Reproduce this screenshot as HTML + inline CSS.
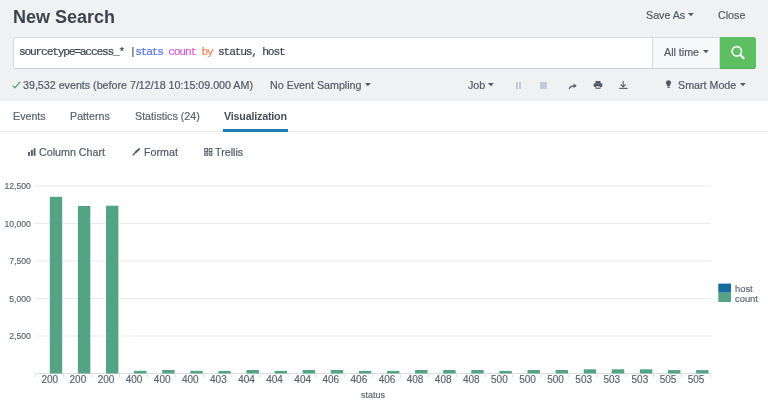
<!DOCTYPE html>
<html><head><meta charset="utf-8">
<style>
*{margin:0;padding:0;box-sizing:border-box}
html,body{width:768px;height:408px;overflow:hidden;background:#fff}
body{position:relative;font-family:"Liberation Sans",sans-serif;color:#515a65}
.a{position:absolute;white-space:pre;line-height:1;will-change:transform}
#hdr{position:absolute;left:0;top:0;width:768px;height:101px;background:#eff1f3}
.t{font-size:10.7px;-webkit-text-stroke:0.2px}
.cr{position:absolute}
.caret{position:absolute;width:0;height:0;border-left:2.9px solid transparent;border-right:2.9px solid transparent;border-top:3.4px solid #515a65}
</style></head><body>
<div id="hdr"></div>
<div class="a" style="left:13px;top:8px;font-size:18px;font-weight:bold;color:#3c444d">New Search</div>
<div class="a t" style="left:646px;top:10px">Save As</div>
<svg class="cr" style="left:688.1px;top:13.3px" width="6" height="4" viewBox="0 0 6 4"><path d="M0 0H5.8L2.9 3.3Z" fill="#515a65"/></svg>
<div class="a t" style="left:717.5px;top:10px">Close</div>

<!-- search bar -->
<div style="position:absolute;left:13px;top:37px;width:743px;height:31.5px;border:1px solid #d5dae0;border-bottom-color:#c9d0d7;border-radius:3px;background:#fff"></div>
<div style="position:absolute;left:652px;top:37px;width:68px;height:31.5px;border:1px solid #d5dae0;border-bottom-color:#c9d0d7;background:#f7f8f9"></div>
<div style="position:absolute;left:720px;top:37px;width:36px;height:31.5px;background:#5dbe62;border-bottom:1px solid #50ad56;border-radius:0 3px 3px 0"></div>
<div class="a" style="left:19.4px;top:46.5px;font-family:'Liberation Mono',monospace;font-size:11.3px;letter-spacing:-1.25px;-webkit-text-stroke:0.2px;color:#3c444d">sourcetype=access_* <span style="color:#515a65">|</span><span style="color:#5877e0">stats</span> <span style="color:#d060d6">count</span> <span style="color:#e5865a">by</span> status, host</div>
<div class="a t" style="left:664px;top:47px">All time</div>
<svg class="cr" style="left:702.9px;top:50.4px" width="6" height="4" viewBox="0 0 6 4"><path d="M0 0H5.8L2.9 3.3Z" fill="#515a65"/></svg>
<svg style="position:absolute;left:725px;top:40px" width="25" height="25" viewBox="0 0 25 25"><circle cx="11.8" cy="11.3" r="4.7" fill="none" stroke="#fff" stroke-width="1.65"/><line x1="15.2" y1="14.8" x2="18.7" y2="18.3" stroke="#fff" stroke-width="2" stroke-linecap="round"/></svg>

<!-- status row -->
<svg style="position:absolute;left:12px;top:81px" width="9" height="8" viewBox="0 0 9 8"><path d="M0.6 4.6 L2.9 6.8 L8.2 0.8" fill="none" stroke="#4ea462" stroke-width="1.25"/></svg>
<div class="a t" style="left:23px;top:80px">39,532 events (before 7/12/18 10:15:09.000 AM)</div>
<div class="a t" style="left:270px;top:80px">No Event Sampling</div>
<svg class="cr" style="left:364.6px;top:82.9px" width="6" height="4" viewBox="0 0 6 4"><path d="M0 0H5.8L2.9 3.3Z" fill="#515a65"/></svg>
<div class="a t" style="left:467.5px;top:80px">Job</div>
<svg class="cr" style="left:488.4px;top:83px" width="6" height="4" viewBox="0 0 6 4"><path d="M0 0H5.8L2.9 3.3Z" fill="#515a65"/></svg>
<div style="position:absolute;left:515.5px;top:81.7px;width:2.3px;height:7px;background:#c3cbd4"></div>
<div style="position:absolute;left:519px;top:81.7px;width:2.3px;height:7px;background:#c3cbd4"></div>
<div style="position:absolute;left:540.1px;top:81.8px;width:7.4px;height:6.9px;background:#c3cbd4"></div>
<svg style="position:absolute;left:568px;top:82px" width="10" height="8" viewBox="0 0 10 8"><path d="M1.2 6.8 C1.8 4.6 3.6 3.8 6.4 3.8" fill="none" stroke="#515a65" stroke-width="1.25"/><path d="M5.6 1.4 L8.6 3.8 L5.6 6.2 Z" fill="#515a65"/></svg>
<svg style="position:absolute;left:593px;top:81px" width="10" height="8" viewBox="0 0 10 8"><rect x="2.5" y="0" width="5" height="2.5" fill="#515a65"/><rect x="0.7" y="2.2" width="8.6" height="3.8" rx="1" fill="#515a65"/><rect x="2.5" y="4.8" width="5" height="3" fill="#515a65"/><rect x="3.4" y="5.2" width="3.2" height="1.6" fill="#eff1f3"/></svg>
<svg style="position:absolute;left:618px;top:81px" width="10" height="8" viewBox="0 0 10 8"><line x1="5.2" y1="0" x2="5.2" y2="5.6" stroke="#515a65" stroke-width="1.05"/><path d="M2.7 3.4 L5.2 5.9 L7.7 3.4" fill="none" stroke="#515a65" stroke-width="1.05"/><line x1="1.2" y1="7.4" x2="9.6" y2="7.4" stroke="#515a65" stroke-width="1.1"/></svg>
<svg style="position:absolute;left:665px;top:80px" width="8" height="9" viewBox="0 0 8 9"><path d="M3.5 0.2 C1.9 0.2 0.9 1.3 0.9 2.7 C0.9 3.9 2 4.6 2.2 6.1 L4.8 6.1 C5 4.6 6.1 3.9 6.1 2.7 C6.1 1.3 5.1 0.2 3.5 0.2 Z" fill="#515a65"/><rect x="2.3" y="6.5" width="2.4" height="1.4" fill="#515a65"/></svg>
<div class="a t" style="left:678px;top:80px">Smart Mode</div>
<svg class="cr" style="left:739.6px;top:82.9px" width="6" height="4" viewBox="0 0 6 4"><path d="M0 0H5.8L2.9 3.3Z" fill="#515a65"/></svg>

<!-- tabs -->
<div style="position:absolute;left:0;top:131px;width:768px;height:1px;background:#e6e9ec"></div>
<div class="a t" style="left:13px;top:111px;color:#5a636d">Events</div>
<div class="a t" style="left:70.3px;top:111px;color:#5a636d">Patterns</div>
<div class="a t" style="left:135.2px;top:111px;color:#5a636d">Statistics (24)</div>
<div class="a t" style="left:224px;top:111px;font-weight:bold;letter-spacing:-0.18px;-webkit-text-stroke:0;color:#474f59">Visualization</div>
<div style="position:absolute;left:223px;top:129px;width:65px;height:3px;background:#1e7bb8"></div>

<!-- chart toolbar -->
<svg style="position:absolute;left:28px;top:148px" width="8" height="8" viewBox="0 0 8 8"><rect x="0" y="4" width="1.9" height="3.8" fill="#515a65"/><rect x="2.9" y="2" width="1.9" height="5.8" fill="#515a65"/><rect x="5.6" y="0.3" width="1.9" height="7.5" fill="#515a65"/></svg>
<div class="a t" style="left:39px;top:147px">Column Chart</div>
<svg style="position:absolute;left:132px;top:148px" width="8" height="8" viewBox="0 0 8 8"><line x1="4.2" y1="3.8" x2="7" y2="1.1" stroke="#515a65" stroke-width="2" stroke-linecap="round"/><line x1="2.2" y1="5.8" x2="4.5" y2="3.5" stroke="#515a65" stroke-width="1.4"/><path d="M0.3 7.8 C0.6 6.6 1 5.4 2.3 5.2 C3 5.3 3.1 6.1 2.7 6.6 C2 7.5 1.2 7.6 0.3 7.8Z" fill="#515a65"/></svg>
<div class="a t" style="left:143.7px;top:147px">Format</div>
<svg style="position:absolute;left:204px;top:148px" width="9" height="8" viewBox="0 0 9 8"><rect x="0.7" y="0.6" width="2.7" height="3" fill="none" stroke="#515a65" stroke-width="1"/><rect x="5.2" y="0.6" width="2.7" height="3" fill="none" stroke="#515a65" stroke-width="1"/><rect x="0.7" y="5" width="2.7" height="2.3" fill="none" stroke="#515a65" stroke-width="1"/><rect x="5.2" y="5" width="2.7" height="2.3" fill="none" stroke="#515a65" stroke-width="1"/></svg>
<div class="a t" style="left:215.2px;top:147px">Trellis</div>

<!-- chart -->
<svg id="chart" style="position:absolute;left:0;top:0;will-change:transform" width="768" height="408" viewBox="0 0 768 408">
<line x1="35" y1="186" x2="711" y2="186" stroke="#e8ebee" stroke-width="1"/>
<text x="30.8" y="189.3" text-anchor="end" font-size="8.6" fill="#58616c" stroke="#58616c" stroke-width="0.15">12,500</text>
<line x1="35" y1="223.5" x2="711" y2="223.5" stroke="#e8ebee" stroke-width="1"/>
<text x="30.8" y="226.8" text-anchor="end" font-size="8.6" fill="#58616c" stroke="#58616c" stroke-width="0.15">10,000</text>
<line x1="35" y1="261" x2="711" y2="261" stroke="#e8ebee" stroke-width="1"/>
<text x="30.8" y="264.3" text-anchor="end" font-size="8.6" fill="#58616c" stroke="#58616c" stroke-width="0.15">7,500</text>
<line x1="35" y1="298.5" x2="711" y2="298.5" stroke="#e8ebee" stroke-width="1"/>
<text x="30.8" y="301.8" text-anchor="end" font-size="8.6" fill="#58616c" stroke="#58616c" stroke-width="0.15">5,000</text>
<line x1="35" y1="336" x2="711" y2="336" stroke="#e8ebee" stroke-width="1"/>
<text x="30.8" y="339.3" text-anchor="end" font-size="8.6" fill="#58616c" stroke="#58616c" stroke-width="0.15">2,500</text>
<line x1="35" y1="373.5" x2="711" y2="373.5" stroke="#d9dee3" stroke-width="1"/>
<line x1="35.20" y1="373.5" x2="35.20" y2="377.5" stroke="#d9dee3" stroke-width="1"/>
<line x1="63.30" y1="373.5" x2="63.30" y2="377.5" stroke="#d9dee3" stroke-width="1"/>
<line x1="91.40" y1="373.5" x2="91.40" y2="377.5" stroke="#d9dee3" stroke-width="1"/>
<line x1="119.50" y1="373.5" x2="119.50" y2="377.5" stroke="#d9dee3" stroke-width="1"/>
<line x1="147.60" y1="373.5" x2="147.60" y2="377.5" stroke="#d9dee3" stroke-width="1"/>
<line x1="175.70" y1="373.5" x2="175.70" y2="377.5" stroke="#d9dee3" stroke-width="1"/>
<line x1="203.80" y1="373.5" x2="203.80" y2="377.5" stroke="#d9dee3" stroke-width="1"/>
<line x1="231.90" y1="373.5" x2="231.90" y2="377.5" stroke="#d9dee3" stroke-width="1"/>
<line x1="260.00" y1="373.5" x2="260.00" y2="377.5" stroke="#d9dee3" stroke-width="1"/>
<line x1="288.10" y1="373.5" x2="288.10" y2="377.5" stroke="#d9dee3" stroke-width="1"/>
<line x1="316.20" y1="373.5" x2="316.20" y2="377.5" stroke="#d9dee3" stroke-width="1"/>
<line x1="344.30" y1="373.5" x2="344.30" y2="377.5" stroke="#d9dee3" stroke-width="1"/>
<line x1="372.40" y1="373.5" x2="372.40" y2="377.5" stroke="#d9dee3" stroke-width="1"/>
<line x1="400.50" y1="373.5" x2="400.50" y2="377.5" stroke="#d9dee3" stroke-width="1"/>
<line x1="428.60" y1="373.5" x2="428.60" y2="377.5" stroke="#d9dee3" stroke-width="1"/>
<line x1="456.70" y1="373.5" x2="456.70" y2="377.5" stroke="#d9dee3" stroke-width="1"/>
<line x1="484.80" y1="373.5" x2="484.80" y2="377.5" stroke="#d9dee3" stroke-width="1"/>
<line x1="512.90" y1="373.5" x2="512.90" y2="377.5" stroke="#d9dee3" stroke-width="1"/>
<line x1="541.00" y1="373.5" x2="541.00" y2="377.5" stroke="#d9dee3" stroke-width="1"/>
<line x1="569.10" y1="373.5" x2="569.10" y2="377.5" stroke="#d9dee3" stroke-width="1"/>
<line x1="597.20" y1="373.5" x2="597.20" y2="377.5" stroke="#d9dee3" stroke-width="1"/>
<line x1="625.30" y1="373.5" x2="625.30" y2="377.5" stroke="#d9dee3" stroke-width="1"/>
<line x1="653.40" y1="373.5" x2="653.40" y2="377.5" stroke="#d9dee3" stroke-width="1"/>
<line x1="681.50" y1="373.5" x2="681.50" y2="377.5" stroke="#d9dee3" stroke-width="1"/>
<line x1="710.80" y1="373.5" x2="710.80" y2="377.5" stroke="#d9dee3" stroke-width="1"/>
<rect x="49.80" y="196.80" width="12.4" height="176.70" fill="#54a385"/>
<text x="49.80" y="382.8" text-anchor="middle" font-size="10" letter-spacing="0" fill="#58616c" stroke="#58616c" stroke-width="0.15">200</text>
<rect x="77.90" y="206.00" width="12.4" height="167.50" fill="#54a385"/>
<text x="77.90" y="382.8" text-anchor="middle" font-size="10" letter-spacing="0" fill="#58616c" stroke="#58616c" stroke-width="0.15">200</text>
<rect x="106.00" y="205.70" width="12.4" height="167.80" fill="#54a385"/>
<text x="106.00" y="382.8" text-anchor="middle" font-size="10" letter-spacing="0" fill="#58616c" stroke="#58616c" stroke-width="0.15">200</text>
<rect x="134.10" y="370.80" width="12.4" height="2.70" fill="#54a385"/>
<text x="134.10" y="382.8" text-anchor="middle" font-size="10" letter-spacing="0" fill="#58616c" stroke="#58616c" stroke-width="0.15">400</text>
<rect x="162.20" y="370.00" width="12.4" height="3.50" fill="#54a385"/>
<text x="162.20" y="382.8" text-anchor="middle" font-size="10" letter-spacing="0" fill="#58616c" stroke="#58616c" stroke-width="0.15">400</text>
<rect x="190.30" y="370.80" width="12.4" height="2.70" fill="#54a385"/>
<text x="190.30" y="382.8" text-anchor="middle" font-size="10" letter-spacing="0" fill="#58616c" stroke="#58616c" stroke-width="0.15">400</text>
<rect x="218.40" y="371.00" width="12.4" height="2.50" fill="#54a385"/>
<text x="218.40" y="382.8" text-anchor="middle" font-size="10" letter-spacing="0" fill="#58616c" stroke="#58616c" stroke-width="0.15">403</text>
<rect x="246.50" y="370.00" width="12.4" height="3.50" fill="#54a385"/>
<text x="246.50" y="382.8" text-anchor="middle" font-size="10" letter-spacing="0" fill="#58616c" stroke="#58616c" stroke-width="0.15">404</text>
<rect x="274.60" y="370.90" width="12.4" height="2.60" fill="#54a385"/>
<text x="274.60" y="382.8" text-anchor="middle" font-size="10" letter-spacing="0" fill="#58616c" stroke="#58616c" stroke-width="0.15">404</text>
<rect x="302.70" y="370.00" width="12.4" height="3.50" fill="#54a385"/>
<text x="302.70" y="382.8" text-anchor="middle" font-size="10" letter-spacing="0" fill="#58616c" stroke="#58616c" stroke-width="0.15">404</text>
<rect x="330.80" y="370.00" width="12.4" height="3.50" fill="#54a385"/>
<text x="330.80" y="382.8" text-anchor="middle" font-size="10" letter-spacing="0" fill="#58616c" stroke="#58616c" stroke-width="0.15">406</text>
<rect x="358.90" y="370.90" width="12.4" height="2.60" fill="#54a385"/>
<text x="358.90" y="382.8" text-anchor="middle" font-size="10" letter-spacing="0" fill="#58616c" stroke="#58616c" stroke-width="0.15">406</text>
<rect x="387.00" y="370.90" width="12.4" height="2.60" fill="#54a385"/>
<text x="387.00" y="382.8" text-anchor="middle" font-size="10" letter-spacing="0" fill="#58616c" stroke="#58616c" stroke-width="0.15">406</text>
<rect x="415.10" y="370.00" width="12.4" height="3.50" fill="#54a385"/>
<text x="415.10" y="382.8" text-anchor="middle" font-size="10" letter-spacing="0" fill="#58616c" stroke="#58616c" stroke-width="0.15">408</text>
<rect x="443.20" y="370.00" width="12.4" height="3.50" fill="#54a385"/>
<text x="443.20" y="382.8" text-anchor="middle" font-size="10" letter-spacing="0" fill="#58616c" stroke="#58616c" stroke-width="0.15">408</text>
<rect x="471.30" y="370.00" width="12.4" height="3.50" fill="#54a385"/>
<text x="471.30" y="382.8" text-anchor="middle" font-size="10" letter-spacing="0" fill="#58616c" stroke="#58616c" stroke-width="0.15">408</text>
<rect x="499.40" y="370.90" width="12.4" height="2.60" fill="#54a385"/>
<text x="499.40" y="382.8" text-anchor="middle" font-size="10" letter-spacing="0" fill="#58616c" stroke="#58616c" stroke-width="0.15">500</text>
<rect x="527.50" y="370.00" width="12.4" height="3.50" fill="#54a385"/>
<text x="527.50" y="382.8" text-anchor="middle" font-size="10" letter-spacing="0" fill="#58616c" stroke="#58616c" stroke-width="0.15">500</text>
<rect x="555.60" y="370.00" width="12.4" height="3.50" fill="#54a385"/>
<text x="555.60" y="382.8" text-anchor="middle" font-size="10" letter-spacing="0" fill="#58616c" stroke="#58616c" stroke-width="0.15">500</text>
<rect x="583.70" y="369.30" width="12.4" height="4.20" fill="#54a385"/>
<text x="583.70" y="382.8" text-anchor="middle" font-size="10" letter-spacing="0" fill="#58616c" stroke="#58616c" stroke-width="0.15">503</text>
<rect x="611.80" y="369.30" width="12.4" height="4.20" fill="#54a385"/>
<text x="611.80" y="382.8" text-anchor="middle" font-size="10" letter-spacing="0" fill="#58616c" stroke="#58616c" stroke-width="0.15">503</text>
<rect x="639.90" y="369.30" width="12.4" height="4.20" fill="#54a385"/>
<text x="639.90" y="382.8" text-anchor="middle" font-size="10" letter-spacing="0" fill="#58616c" stroke="#58616c" stroke-width="0.15">503</text>
<rect x="668.00" y="370.10" width="12.4" height="3.40" fill="#54a385"/>
<text x="668.00" y="382.8" text-anchor="middle" font-size="10" letter-spacing="0" fill="#58616c" stroke="#58616c" stroke-width="0.15">505</text>
<rect x="696.10" y="370.10" width="12.4" height="3.40" fill="#54a385"/>
<text x="696.10" y="382.8" text-anchor="middle" font-size="10" letter-spacing="0" fill="#58616c" stroke="#58616c" stroke-width="0.15">505</text>
<text x="373" y="397.6" text-anchor="middle" font-size="9" fill="#58616c" stroke="#58616c" stroke-width="0.15">status</text>
<rect x="718.3" y="283.6" width="12.7" height="9.1" fill="#166c9b"/>
<rect x="718.3" y="292.7" width="12.7" height="9.3" fill="#54a385"/>
<text x="735" y="292.2" font-size="9.4" fill="#58616c" stroke="#58616c" stroke-width="0.15">host</text>
<text x="735" y="301.7" font-size="9.4" fill="#58616c" stroke="#58616c" stroke-width="0.15">count</text>
</svg>
</body></html>
